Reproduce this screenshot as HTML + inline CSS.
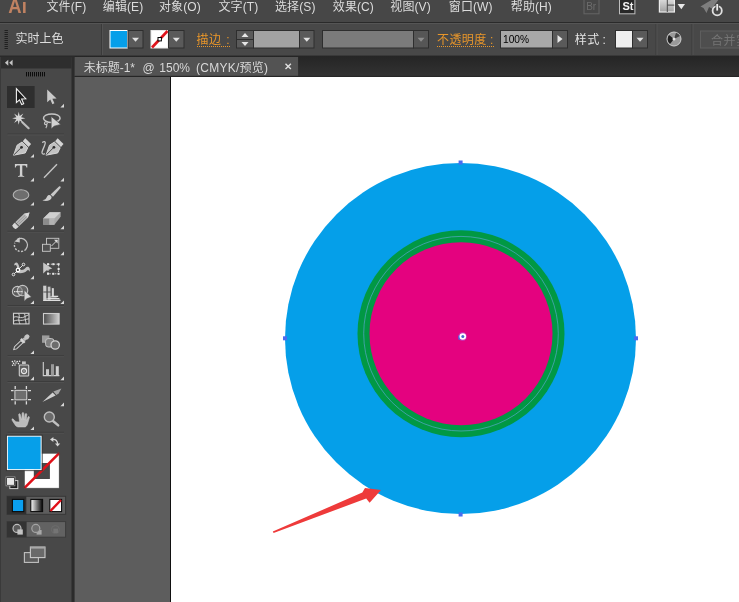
<!DOCTYPE html>
<html><head><meta charset="utf-8"><title>Illustrator</title>
<style>
html,body{margin:0;padding:0;background:#484848;overflow:hidden}
body{width:739px;height:602px;position:relative;font-family:"Liberation Sans","Noto Sans CJK SC",sans-serif}
svg{position:absolute;left:0;top:0;display:block}
svg text{font-family:"Liberation Sans","Noto Sans CJK SC",sans-serif;-webkit-font-smoothing:antialiased}
svg{will-change:transform}
</style></head><body>
<svg width="739" height="602" viewBox="0 0 739 602">
<defs>
<linearGradient id="gr1" x1="0" y1="0" x2="1" y2="0"><stop offset="0" stop-color="#fff"/><stop offset="1" stop-color="#000"/></linearGradient>
<linearGradient id="gr2" x1="0" y1="0" x2="1" y2="0"><stop offset="0" stop-color="#4a4a4a"/><stop offset="1" stop-color="#d0d0d0"/></linearGradient>
<linearGradient id="gr3" x1="0" y1="0" x2="0" y2="1"><stop offset="0" stop-color="#6a6a6a"/><stop offset="1" stop-color="#8a8a8a"/></linearGradient>
<linearGradient id="gr4" x1="0" y1="0" x2="0" y2="1"><stop offset="0" stop-color="#e6e6e6"/><stop offset="1" stop-color="#a0a0a0"/></linearGradient>
<linearGradient id="gr5" x1="0" y1="0" x2="0" y2="1"><stop offset="0" stop-color="#252525"/><stop offset="1" stop-color="#333333"/></linearGradient>
<path id="tri" d="M3.6 0V3.6H0Z" fill="#d8d8d8"/>
</defs>
<rect x="0" y="0" width="739" height="602" fill="#484848" />
<rect x="0" y="0" width="739" height="22" fill="#474747" />
<rect x="0" y="22" width="739" height="1" fill="#2a2a2a" />
<rect x="0" y="23" width="739" height="33" fill="#484848" />
<rect x="0" y="23" width="739" height="1" fill="#555555" />
<rect x="0" y="55.5" width="739" height="2" fill="#2a2a2a" />
<rect x="0" y="57" width="71.5" height="545" fill="#484848" />
<rect x="0" y="57" width="71.5" height="11.5" fill="#2e2e2e" />
<rect x="71.5" y="57" width="3.2" height="545" fill="#2b2b2b" />
<rect x="0" y="57" width="1" height="545" fill="#3a3a3a" />
<rect x="74.7" y="56" width="665" height="21" fill="url(#gr5)" />
<rect x="74.7" y="57" width="223.4" height="18.9" fill="#535353" />
<rect x="74.7" y="75.9" width="665" height="1.1" fill="#262626" />
<rect x="74.7" y="77" width="95.8" height="525" fill="#5d5d5d" />
<rect x="170" y="77" width="570" height="525" fill="#ffffff" />
<rect x="170" y="77" width="1" height="525" fill="#111111" />
<g transform="translate(8.300 0) scale(0.880 1) translate(-8.300 0)"><g aria-label="Ai"><text x="8.30" y="13.00" font-size="21" fill="#c08262" font-weight="bold">Ai</text></g></g>
<g aria-label="文件(F)"><text x="46.50" y="11.20" font-size="12" fill="#dcdcdc" letter-spacing="0.1">文件</text><text x="70.70" y="11.20" font-size="12" fill="#dcdcdc" letter-spacing="0.1">(F)</text></g>
<g aria-label="编辑(E)"><text x="102.80" y="11.20" font-size="12" fill="#dcdcdc" letter-spacing="0.1">编辑</text><text x="127.00" y="11.20" font-size="12" fill="#dcdcdc" letter-spacing="0.1">(E)</text></g>
<g aria-label="对象(O)"><text x="159.00" y="11.20" font-size="12" fill="#dcdcdc" letter-spacing="0.1">对象</text><text x="183.20" y="11.20" font-size="12" fill="#dcdcdc" letter-spacing="0.1">(O)</text></g>
<g aria-label="文字(T)"><text x="218.50" y="11.20" font-size="12" fill="#dcdcdc" letter-spacing="0.1">文字</text><text x="242.70" y="11.20" font-size="12" fill="#dcdcdc" letter-spacing="0.1">(T)</text></g>
<g aria-label="选择(S)"><text x="275.00" y="11.20" font-size="12" fill="#dcdcdc" letter-spacing="0.1">选择</text><text x="299.20" y="11.20" font-size="12" fill="#dcdcdc" letter-spacing="0.1">(S)</text></g>
<g aria-label="效果(C)"><text x="332.80" y="11.20" font-size="12" fill="#dcdcdc" letter-spacing="0.1">效果</text><text x="357.00" y="11.20" font-size="12" fill="#dcdcdc" letter-spacing="0.1">(C)</text></g>
<g aria-label="视图(V)"><text x="390.30" y="11.20" font-size="12" fill="#dcdcdc" letter-spacing="0.1">视图</text><text x="414.50" y="11.20" font-size="12" fill="#dcdcdc" letter-spacing="0.1">(V)</text></g>
<g aria-label="窗口(W)"><text x="448.80" y="11.20" font-size="12" fill="#dcdcdc" letter-spacing="0.1">窗口</text><text x="473.00" y="11.20" font-size="12" fill="#dcdcdc" letter-spacing="0.1">(W)</text></g>
<g aria-label="帮助(H)"><text x="510.80" y="11.20" font-size="12" fill="#dcdcdc" letter-spacing="0.1">帮助</text><text x="535.00" y="11.20" font-size="12" fill="#dcdcdc" letter-spacing="0.1">(H)</text></g>
<rect x="4.5" y="30" width="3.4" height="1" fill="#202020" />
<rect x="4.5" y="32" width="3.4" height="1" fill="#202020" />
<rect x="4.5" y="34" width="3.4" height="1" fill="#202020" />
<rect x="4.5" y="36" width="3.4" height="1" fill="#202020" />
<rect x="4.5" y="38" width="3.4" height="1" fill="#202020" />
<rect x="4.5" y="40" width="3.4" height="1" fill="#202020" />
<rect x="4.5" y="42" width="3.4" height="1" fill="#202020" />
<rect x="4.5" y="44" width="3.4" height="1" fill="#202020" />
<rect x="4.5" y="46" width="3.4" height="1" fill="#202020" />
<rect x="4.5" y="48" width="3.4" height="1" fill="#202020" />
<g aria-label="实时上色"><text x="15.50" y="43.00" font-size="12" fill="#dedede">实时上色</text></g>
<rect x="101" y="24" width="1" height="31" fill="#3a3a3a" />
<rect x="102" y="24" width="1" height="31" fill="#525252" />
<rect x="110" y="30.5" width="17.5" height="17.5" fill="#069fe9" stroke="#ffffff" stroke-width="1"/>
<rect x="128" y="30.5" width="15" height="17.5" fill="#5a5a5a" stroke="#2e2e2e" stroke-width="1"/>
<path d="M132 37.75h7l-3.5 4z" fill="#e0e0e0"/>
<rect x="151" y="30.5" width="17" height="17.5" fill="#ffffff" stroke="#e8e8e8" stroke-width="1"/>
<path d="M152 47.500L167.500 31" stroke="#e0141c" stroke-width="2.600"/>
<rect x="158" y="37.5" width="3.4" height="3.4" fill="#ffffff" stroke="#000" stroke-width="1"/>
<rect x="168.5" y="30.5" width="15.5" height="17.5" fill="#5a5a5a" stroke="#2e2e2e" stroke-width="1"/>
<path d="M172.75 37.75h7l-3.5 4z" fill="#e0e0e0"/>
<g aria-label="描边"><text x="196.50" y="44.00" font-size="12" fill="#e8962a" letter-spacing="0.5">描边</text></g>
<g aria-label=":"><text x="226.30" y="43.50" font-size="12" fill="#e8962a">:</text></g>
<path d="M197 46.5H231" stroke="#e8962a" stroke-width="1" stroke-dasharray="1 1"/>
<rect x="236.5" y="30.5" width="17" height="17.5" fill="#5a5a5a" stroke="#2e2e2e" stroke-width="1"/>
<rect x="236.5" y="39" width="17" height="1" fill="#2e2e2e" />
<path d="M241.5 37h7l-3.5-4z" fill="#e6e6e6"/><path d="M241.5 42h7l-3.5 4z" fill="#e6e6e6"/>
<rect x="253.5" y="30.5" width="46" height="17.5" fill="#a2a2a2" stroke="#2e2e2e" stroke-width="1"/>
<rect x="299.5" y="30.5" width="14.5" height="17.5" fill="#5a5a5a" stroke="#2e2e2e" stroke-width="1"/>
<path d="M303.25 37.75h7l-3.5 4z" fill="#e0e0e0"/>
<rect x="322.5" y="30.5" width="91" height="17.5" fill="#7b7b7b" stroke="#2e2e2e" stroke-width="1"/>
<rect x="413.5" y="30.5" width="15" height="17.5" fill="#565656" stroke="#2e2e2e" stroke-width="1"/>
<path d="M417.5 37.75h7l-3.5 4z" fill="#8c8c8c"/>
<g aria-label="不透明度"><text x="437.00" y="43.80" font-size="12" fill="#e8962a" letter-spacing="0.4">不透明度</text></g>
<g aria-label=":"><text x="490.00" y="43.50" font-size="12" fill="#e8962a">:</text></g>
<path d="M437 46.5H494" stroke="#e8962a" stroke-width="1" stroke-dasharray="1 1"/>
<rect x="500.5" y="30.5" width="52" height="17.5" fill="#a8a8a8" stroke="#2e2e2e" stroke-width="1"/>
<g aria-label="100%"><text x="503.00" y="42.50" font-size="10.2" fill="#000000">100%</text></g>
<rect x="552.5" y="30.5" width="15" height="17.5" fill="#5a5a5a" stroke="#2e2e2e" stroke-width="1"/>
<path d="M557.5 35v8l5-4z" fill="#e8e8e8"/>
<g aria-label="样式"><text x="574.80" y="44.00" font-size="12" fill="#e4e4e4" letter-spacing="0.4">样式</text></g>
<g aria-label=":"><text x="602.50" y="43.50" font-size="12" fill="#e4e4e4">:</text></g>
<rect x="615.5" y="30.5" width="17" height="17.5" fill="#eeeeee" stroke="#2e2e2e" stroke-width="1"/>
<rect x="632.5" y="30.5" width="15" height="17.5" fill="#5a5a5a" stroke="#2e2e2e" stroke-width="1"/>
<path d="M636.5 37.75h7l-3.5 4z" fill="#e0e0e0"/>
<rect x="655.5" y="24" width="1" height="31" fill="#3a3a3a" />
<rect x="656.5" y="24" width="1" height="31" fill="#525252" />
<circle cx="674" cy="39" r="7" fill="#9a9a9a" stroke="#d0d0d0" stroke-width="1"/><path d="M674 39L669 35A6.4 6.4 0 0 0 670 44Z" fill="#222"/><path d="M674 39L680 36A6.4 6.4 0 0 0 676 32.8Z" fill="#444"/><circle cx="674" cy="39" r="1.5" fill="#e8e8e8"/>
<rect x="691.5" y="24" width="1" height="31" fill="#3a3a3a" />
<rect x="692.5" y="24" width="1" height="31" fill="#525252" />
<rect x="700.5" y="31" width="45" height="17" fill="#4e4e4e" stroke="#5e5e5e" stroke-width="1"/>
<g aria-label="合并实"><text x="711.00" y="44.50" font-size="12" fill="#747474" letter-spacing="0.6">合并实</text></g>
<rect x="584" y="-3" width="15" height="16.8" fill="none" stroke="#666666" stroke-width="1"/>
<g aria-label="Br"><text x="586.20" y="10.40" font-size="10" fill="#6c6c6c">Br</text></g>
<rect x="619.5" y="-3" width="15.4" height="16.8" fill="#282828" stroke="#bebebe" stroke-width="1"/>
<g aria-label="St"><text x="622.40" y="10.40" font-size="11" fill="#f4f4f4" font-weight="bold">St</text></g>
<rect x="659.4" y="-3" width="15" height="15" fill="url(#gr4)" stroke="#ececec" stroke-width="1.200"/>
<rect x="666.8" y="-3" width="1" height="15" fill="#4a4a4a" />
<rect x="667.3" y="4.6" width="7" height="1" fill="#4a4a4a" />
<path d="M677.600 4h7.400l-3.700 5.200z" fill="#e8e8e8"/>
<path d="M700.500 6.500L713 -1L719 -1L712 8.500L709 7L706.500 13L703.500 8Z" fill="#7e7e7e"/><circle cx="717.200" cy="10.700" r="4.600" fill="#474747" stroke="#e0e0e0" stroke-width="1.800"/><rect x="715.600" y="3.600" width="3.200" height="7" fill="#474747"/><rect x="716.300" y="4" width="1.800" height="6.600" fill="#ececec"/>
<g aria-label="未标题-1*"><text x="83.70" y="71.80" font-size="12" fill="#d8d8d8">未标题</text><text x="119.70" y="71.80" font-size="12" fill="#d8d8d8">-1*</text></g>
<g aria-label="@"><text x="142.60" y="71.80" font-size="12" fill="#d8d8d8">@</text></g>
<g aria-label="150%"><text x="159.30" y="71.80" font-size="12" fill="#d8d8d8">150%</text></g>
<g aria-label="(CMYK/预览)"><text x="196.00" y="71.80" font-size="12" fill="#d8d8d8" letter-spacing="0.25">(CMYK/</text><text x="239.50" y="71.80" font-size="12" fill="#d8d8d8" letter-spacing="0.25">预览</text><text x="264.00" y="71.80" font-size="12" fill="#d8d8d8" letter-spacing="0.25">)</text></g>
<path d="M285.5 63.8l5.4 5.2M290.9 63.8l-5.4 5.2" stroke="#e0e0e0" stroke-width="1.4"/>
<circle cx="460.5" cy="338.5" r="175.5" fill="#059fe9"/>
<circle cx="461" cy="333.7" r="103.5" fill="#019844"/>
<circle cx="461" cy="333.7" r="97.3" fill="none" stroke="#5aa6c8" stroke-width="0.7"/>
<circle cx="461" cy="333.7" r="91.5" fill="#e4027f"/>
<rect x="458.6" y="160.5" width="4" height="4" fill="#4a6cf0" />
<rect x="458.6" y="512.5" width="4" height="4" fill="#4a6cf0" />
<rect x="283" y="336.3" width="4" height="4" fill="#4a6cf0" />
<rect x="634" y="336.3" width="4" height="4" fill="#4a6cf0" />
<circle cx="462.600" cy="336.600" r="4.500" fill="#c43cc0" fill-opacity="0.700"/><rect x="458.300" y="335.600" width="3" height="4" fill="#4a64e0"/><circle cx="462.800" cy="336.500" r="3.300" fill="#ffffff"/><circle cx="462.800" cy="336.500" r="1.500" fill="#3f6cc8"/>
<path d="M272.800 531.600L362.300 492.500L365 488L381 490L369.600 502.800L366.200 498.500L273.600 533Z" fill="#ee3a3a"/>
<path d="M8.3 59.8v6l-3.4-3zM12.6 59.8v6l-3.4-3z" fill="#c4c4c4"/>
<rect x="26" y="72" width="1" height="4.4" fill="#0c0c0c" />
<rect x="28" y="72" width="1" height="4.4" fill="#0c0c0c" />
<rect x="30" y="72" width="1" height="4.4" fill="#0c0c0c" />
<rect x="32" y="72" width="1" height="4.4" fill="#0c0c0c" />
<rect x="34" y="72" width="1" height="4.4" fill="#0c0c0c" />
<rect x="36" y="72" width="1" height="4.4" fill="#0c0c0c" />
<rect x="38" y="72" width="1" height="4.4" fill="#0c0c0c" />
<rect x="40" y="72" width="1" height="4.4" fill="#0c0c0c" />
<rect x="42" y="72" width="1" height="4.4" fill="#0c0c0c" />
<rect x="44" y="72" width="1" height="4.4" fill="#0c0c0c" />
<rect x="7" y="86" width="27.6" height="22" fill="#2e2e2e" />
<path d="M16.4 88.6V102.6L19.5 99.8L21.7 104.6L23.7 103.7L21.6 99L25.8 98.7Z" fill="#1a1a1a" stroke="#f2f2f2" stroke-width="1.1" stroke-linejoin="miter"/>
<path d="M47.2 89.4V102.2L50.3 99.6L52.4 104.2L54.4 103.3L52.4 98.8L56.6 98.4Z" fill="#c9c9c9"/>
<use href="#tri" x="60.4" y="103.8"/>
<path d="M22.3 122.3L28.6 128.2" stroke="#bdbdbd" stroke-width="2.2" stroke-linecap="round"/>
<path d="M18.7 111.8l1 4.2 3.6-2.4-2.2 3.6 4.3 1-4.3 1 2.2 3.7-3.6-2.4-1 4.3-1-4.3-3.6 2.4 2.3-3.7-4.3-1 4.3-1-2.3-3.6 3.6 2.4z" fill="#d6d6d6"/>
<ellipse cx="51.8" cy="118.2" rx="8.3" ry="4.3" fill="none" stroke="#c6c6c6" stroke-width="1.5"/>
<path d="M45.6 121.4c-1.6 1.2-1.4 3 .2 3.2 1.4.2 2-1.4.8-2.2M46.6 124.6c.6 1.2.2 2.4-.8 3.4" fill="none" stroke="#c6c6c6" stroke-width="1.2"/>
<path d="M51.2 116.4V129L54 126.2L60.8 124.4Z" fill="#d2d2d2" stroke="#484848" stroke-width="0.6"/>
<rect x="7.5" y="133.5" width="56.5" height="1" fill="#3c3c3c" />
<rect x="7.5" y="134.5" width="56.5" height="1" fill="#505050" />
<g transform="translate(13.6 155.2) scale(1.1 1.17)">
<path d="M10.6 -14.4L15.9 -9.6L13.6 -7.1L8.3 -11.9Z" fill="#d4d4d4"/>
<path d="M0 0L3.2 -8.6L7.6 -11.2L12.9 -6.4L10.6 -1.9Z" fill="#c2c2c2" stroke="#dcdcdc" stroke-width="0.8" stroke-linejoin="round"/>
<path d="M0.4 -0.4L6.6 -6.2" stroke="#3a3a3a" stroke-width="0.8"/>
<circle cx="7.2" cy="-6.7" r="1.25" fill="#2e2e2e"/>
</g>
<use href="#tri" x="30.4" y="153.9"/>
<g transform="translate(46 155.2) scale(1.1 1.17)">
<path d="M10.6 -14.4L15.9 -9.6L13.6 -7.1L8.3 -11.9Z" fill="#d4d4d4"/>
<path d="M0 0L3.2 -8.6L7.6 -11.2L12.9 -6.4L10.6 -1.9Z" fill="#c2c2c2" stroke="#dcdcdc" stroke-width="0.8" stroke-linejoin="round"/>
<path d="M0.4 -0.4L6.6 -6.2" stroke="#3a3a3a" stroke-width="0.8"/>
<circle cx="7.2" cy="-6.7" r="1.25" fill="#2e2e2e"/>
</g>
<path d="M42.6 142.2c1.4-1.2 3-.6 2.6 1.2-.6 3-2.8 6.4-3.2 8.8-.2 1.6.8 2.2 2.4 1.6" fill="none" stroke="#c8c8c8" stroke-width="1.3" stroke-linecap="round"/>
<path d="M14.9 164.1h12.4v3.3h-.9c-.2-1.5-.8-2-2.2-2h-1.9v9c0 1.2.5 1.5 1.9 1.6v.8h-6.2v-.8c1.400-.1 1.900-.4 1.900-1.600v-9h-1.900c-1.400 0-2 .5-2.200 2h-.9z" fill="#d0d0d0"/>
<use href="#tri" x="30.4" y="177.8"/>
<path d="M44 177.8L57 164.2" stroke="#c4c4c4" stroke-width="1.4"/>
<use href="#tri" x="60.4" y="177.8"/>
<ellipse cx="21" cy="194.9" rx="7.8" ry="5.2" fill="#6e6e6e" stroke="#b4b4b4" stroke-width="1.1"/>
<use href="#tri" x="30.4" y="202"/>
<path d="M50.6 194.6L59 186.6c1-.9 2.300.3 1.500 1.300L53 196.800Z" fill="#c8c8c8"/>
<path d="M42.4 200.200c2.600-.2 3.800-1.400 4.600-3.400.800-1.800 2.600-2.200 3.800-1 1.400 1.400 1 3.200-1 4.200-2.400 1.200-5.200 1.200-7.400.2z" fill="#cdcdcd"/>
<use href="#tri" x="60.4" y="202"/>
<g transform="translate(14 227.2) rotate(-43.5)"><path d="M0 -2.400L3.200 -2.800H16.500L21.400 0L16.500 2.800H3.200L0 2.400Z" fill="#b9b9b9"/><path d="M0 -2.400L3.200 -2.800V2.800L0 2.400C-0.8 1 -0.8 -1 0 -2.400Z" fill="#d6d6d6"/><path d="M4.200 -2.800v5.600" stroke="#484848" stroke-width="0.9"/><path d="M16.500 -2.800L21.400 0L16.500 2.800Z" fill="#d8d8d8"/><path d="M5 -0.9H16.500M5 1H16.500" stroke="#8c8c8c" stroke-width="0.7"/></g>
<use href="#tri" x="30.4" y="225.6"/>
<path d="M43.2 218.600L49.600 212.200H60.600L60.600 216.800L54.400 224.800H43.200Z" fill="#a8a8a8"/>
<path d="M43.200 218.600L49.600 212.200H60.600L54.400 218.600Z" fill="#cfcfcf"/>
<path d="M43.200 218.600H49.300V224.800H43.200Z" fill="#8c8c8c"/><path d="M49.300 218.600H54.400V224.800H49.300Z" fill="#b4b4b4"/>
<use href="#tri" x="60.4" y="225.6"/>
<rect x="7.5" y="230.8" width="56.5" height="1" fill="#3c3c3c" />
<rect x="7.5" y="231.8" width="56.5" height="1" fill="#505050" />
<path d="M17.17 239.68A6.500 6.500 0 0 1 25.88 249.18" fill="none" stroke="#c2c2c2" stroke-width="1.400"/>
<path d="M25.88 249.18A6.500 6.500 0 0 1 14.79 242.78" fill="none" stroke="#c2c2c2" stroke-width="1.400" stroke-dasharray="2 1.400"/>
<path d="M14.400 241.600L19.600 237.200L19.800 242.400Z" fill="#c8c8c8"/>
<use href="#tri" x="30.4" y="251.6"/>
<rect x="46.5" y="238.3" width="12.3" height="10" fill="#484848" stroke="#c8c8c8" stroke-width="0.900"/>
<rect x="42.5" y="244.3" width="7.8" height="7" fill="#505050" stroke="#c8c8c8" stroke-width="0.900"/>
<path d="M51.500 246L57 240.500" stroke="#d4d4d4" stroke-width="1"/><path d="M57.600 239.800V243.400L54 239.800Z" fill="#dcdcdc"/>
<use href="#tri" x="60.4" y="251.6"/>
<path d="M14.2 265.4C14 262.800 16.600 261.600 17.900 263.400C19.100 265.400 19.500 268 20.600 269.800C22.400 270.200 24.400 269.400 25.400 268C26.700 266.200 29 266.300 29.600 268.300C30 269.600 29.900 271 29.600 271.900C29.200 270.100 27.900 269.400 27 270.600C25 273.200 20 273.800 15.800 272.600C17 270.200 17.300 268 16.700 265.900C16.300 264.700 15 264.600 14.200 265.400Z" fill="#c2c2c2"/>
<path d="M13.500 274.500L23.500 264.500" stroke="#f0f0f0" stroke-width="0.900"/>
<circle cx="13.500" cy="274.500" r="1.300" fill="#484848" stroke="#f2f2f2" stroke-width="0.900"/><circle cx="23.500" cy="264.500" r="1.300" fill="#484848" stroke="#f2f2f2" stroke-width="0.900"/><circle cx="17.900" cy="270" r="1.700" fill="#3a3a3a" stroke="#ffffff" stroke-width="1.200"/>
<use href="#tri" x="30.4" y="275.6"/>
<rect x="48" y="264.200" width="10.600" height="9.600" fill="none" stroke="#cfcfcf" stroke-width="1" stroke-dasharray="1.600 1.200"/>
<rect x="47" y="263.2" width="2" height="2" fill="#e4e4e4" />
<rect x="52.3" y="263.2" width="2" height="2" fill="#e4e4e4" />
<rect x="57.6" y="263.2" width="2" height="2" fill="#e4e4e4" />
<rect x="57.6" y="268" width="2" height="2" fill="#e4e4e4" />
<rect x="57.6" y="272.8" width="2" height="2" fill="#e4e4e4" />
<rect x="52.3" y="272.8" width="2" height="2" fill="#e4e4e4" />
<rect x="47" y="272.8" width="2" height="2" fill="#e4e4e4" />
<path d="M43.200 262.400V273.400L46.400 270.600L52.200 268.400Z" fill="#c6c6c6"/>
<circle cx="17.400" cy="291.400" r="5" fill="#5c5c5c" stroke="#c4c4c4" stroke-width="1.100"/><circle cx="22.600" cy="290.600" r="5.200" fill="#7a7a7a" fill-opacity="0.600" stroke="#c4c4c4" stroke-width="1.100"/>
<path d="M14.200 291.600H23" stroke="#ffffff" stroke-width="1.300" stroke-dasharray="1.200 0.900"/>
<path d="M24.200 290V301.200L27 298.600L31.400 297Z" fill="#d4d4d4" stroke="#484848" stroke-width="0.500"/>
<use href="#tri" x="30.4" y="300.4"/>
<path d="M43.300 285.700L53.800 288.400V296L60.400 299.200V301H43.300Z" fill="#8e8e8e"/>
<rect x="43.3" y="285.7" width="3.2" height="15.2" fill="#cdcdcd" />
<rect x="47.7" y="286.7" width="2.9" height="14" fill="#c0c0c0" />
<rect x="51.7" y="288.2" width="2.1" height="8.6" fill="#d6d6d6" />
<rect x="43.3" y="291.5" width="7.6" height="1" fill="#505050" />
<rect x="46.5" y="286" width="1.2" height="12" fill="#4c4c4c" />
<rect x="50.6" y="287" width="1.1" height="9" fill="#4c4c4c" />
<path d="M51.700 296.400H58.200M47.700 298.500H59.400M43.300 300.500H60.400" stroke="#dedede" stroke-width="1.100"/>
<use href="#tri" x="60.4" y="300.4"/>
<rect x="7.5" y="305" width="56.5" height="1" fill="#3c3c3c" />
<rect x="7.5" y="306" width="56.5" height="1" fill="#505050" />
<rect x="13.5" y="313.3" width="15.5" height="10.6" fill="#3c3c3c" stroke="#d0d0d0" stroke-width="1.100"/>
<path d="M13.500 317.200c3.200-1.600 6.200 1.200 9.200.4 2.200-.6 4.200-2.400 6.200-3M13.500 321.200c2.800-1.400 4.800-1 7.200-.8 2.800.2 5.600-1.400 8.200-1.600M18.600 313.500c1.600 2.200-.2 4.800.2 7 .2 1.400 1 2.600 1.200 3.600M24.200 313.500c1.600 1.800.4 4.200 1.200 6.400.4 1.400.8 2.800.6 4.200" fill="none" stroke="#d6d6d6" stroke-width="0.950"/>
<rect x="43.5" y="313.5" width="15.6" height="10.6" fill="url(#gr2)" stroke="#cdcdcd" stroke-width="1.100"/>
<g transform="translate(13.700 349.600) rotate(-44)"><path d="M0 0L2.600 -1.500H11.400V1.500H2.600Z" fill="#484848" stroke="#d2d2d2" stroke-width="1"/><rect x="11.400" y="-2.700" width="2.400" height="5.400" fill="#d6d6d6"/><rect x="13.800" y="-1.600" width="2.400" height="3.200" fill="#bcbcbc"/><rect x="15.600" y="-2.300" width="5.400" height="4.600" rx="2.200" fill="#c4c4c4"/></g>
<use href="#tri" x="30.4" y="350.4"/>
<rect x="42" y="335.4" width="7.4" height="7.4" fill="#9c9c9c" />
<rect x="45.600" y="338.600" width="8.400" height="8.400" rx="2.600" fill="#7e7e7e" stroke="#c6c6c6" stroke-width="1"/>
<circle cx="55.200" cy="345" r="4.200" fill="#6c6c6c" stroke="#cfcfcf" stroke-width="1.300"/>
<rect x="7.5" y="355.2" width="56.5" height="1" fill="#3c3c3c" />
<rect x="7.5" y="356.2" width="56.5" height="1" fill="#505050" />
<rect x="19.300" y="365" width="9.400" height="11" rx="0.800" fill="#5e5e5e" stroke="#cdcdcd" stroke-width="1.100"/>
<rect x="22" y="361.4" width="3.8" height="2.6" fill="#c4c4c4" />
<circle cx="24" cy="371" r="2.500" fill="#484848" stroke="#e6e6e6" stroke-width="1.300"/><circle cx="24" cy="371" r="0.800" fill="#e6e6e6"/>
<circle cx="12.4" cy="361.6" r="0.800" fill="#e8e8e8"/>
<circle cx="14.8" cy="361" r="0.800" fill="#e8e8e8"/>
<circle cx="17.2" cy="361.6" r="0.800" fill="#e8e8e8"/>
<circle cx="19.6" cy="361.2" r="0.800" fill="#e8e8e8"/>
<circle cx="13.6" cy="363.4" r="0.800" fill="#e8e8e8"/>
<circle cx="16" cy="363" r="0.800" fill="#e8e8e8"/>
<circle cx="18.4" cy="363.6" r="0.800" fill="#e8e8e8"/>
<circle cx="12.6" cy="365.2" r="0.800" fill="#e8e8e8"/>
<circle cx="15" cy="365" r="0.800" fill="#e8e8e8"/>
<use href="#tri" x="30.4" y="376.6"/>
<path d="M43.300 362V375.600H59.400" stroke="#d0d0d0" stroke-width="1.100" fill="none"/>
<rect x="46" y="369.2" width="3" height="6.4" fill="#c6c6c6" />
<rect x="51" y="364.2" width="3" height="11.4" fill="#9a9a9a" />
<rect x="55.8" y="366.2" width="3" height="9.4" fill="#d0d0d0" />
<use href="#tri" x="60.4" y="376.6"/>
<rect x="7.5" y="381" width="56.5" height="1" fill="#3c3c3c" />
<rect x="7.5" y="382" width="56.5" height="1" fill="#505050" />
<rect x="14.9" y="390.4" width="11.8" height="9.4" fill="#6e6e6e" stroke="#c8c8c8" stroke-width="1.100"/>
<path d="M15.200 386V389M26.400 386V389M15.200 401.200V404.400M26.400 401.200V404.400M11 390.600H13.600M11 399.600H13.600M28 390.600H31M28 399.600H31" stroke="#dcdcdc" stroke-width="1.300"/>
<path d="M42.400 402L52.600 392.400L55.600 395.600Z" fill="#cfcfcf"/><path d="M53.400 391.600L61.400 388.600L58.600 393.600L56.400 395Z" fill="#a6a6a6"/>
<use href="#tri" x="60.4" y="402.6"/>
<path d="M15.800 421.800c-1.200-1.600-2.400-2.800-3.600-3 -.8 1 .6 2.600 1.800 4.400 1.200 1.800 2 3.600 4 3.800h7c1.600-.4 2.200-2 2.800-4l1.600-5.400c.2-1-.8-1.400-1.400-.6l-1.800 3.800.6-6.400c0-1.100-1.400-1.200-1.700-.1l-1 5.700-.3-6.600c-.1-1.200-1.600-1.200-1.700 0l-.4 6.600-1.400-5.600c-.3-1.100-1.700-.9-1.600.3l.9 7.300z" fill="#bcbcbc" stroke="#d0d0d0" stroke-width="0.500"/>
<use href="#tri" x="30.4" y="426.4"/>
<path d="M53 421L58.200 425.400" stroke="#c0c0c0" stroke-width="2.400" stroke-linecap="round"/>
<circle cx="49.300" cy="417" r="5" fill="#6a6a6a" stroke="#bdbdbd" stroke-width="1.400"/>
<rect x="7.5" y="431.8" width="56.5" height="1" fill="#3c3c3c" />
<rect x="7.5" y="432.8" width="56.5" height="1" fill="#505050" />
<path d="M24.300 453.200H59.200V488.200H24.300ZM33.900 463V478.900H49.700V463Z" fill="#ffffff" fill-rule="evenodd"/>
<rect x="33.9" y="463" width="15.8" height="15.9" fill="#484848" />
<path d="M24.300 488.200L59.200 453.200" stroke="#e01018" stroke-width="2.600"/>
<rect x="24.300" y="453.200" width="34.900" height="35" fill="none" stroke="#3a3a3a" stroke-width="0.600"/>
<rect x="7.3" y="436.1" width="33.9" height="33.6" fill="#069fe9" stroke="#ffffff" stroke-width="1.100"/>
<rect x="6.300" y="435.100" width="35.900" height="35.600" fill="none" stroke="#333" stroke-width="0.800"/>
<path d="M52.200 439.400c3.600-.4 5.600 1.600 5.400 5.200" fill="none" stroke="#d4d4d4" stroke-width="1.300"/><path d="M50 439.500L53.400 437V442Z" fill="#d8d8d8"/><path d="M57.600 446.600L55 443.400H60.200Z" fill="#d8d8d8"/>
<rect x="9.8" y="480.6" width="8" height="8" fill="#1c1c1c" stroke="#cfcfcf" stroke-width="1"/>
<rect x="6.5" y="477.4" width="8" height="8" fill="#e8e8e8" stroke="#1c1c1c" stroke-width="1"/>
<rect x="6" y="476.900" width="9" height="9" fill="none" stroke="#bdbdbd" stroke-width="0.600"/>
<rect x="7" y="496.3" width="58.6" height="18" fill="#5e5e5e" stroke="#383838" stroke-width="1"/>
<rect x="7" y="496.3" width="19.3" height="18" fill="#303030" />
<rect x="12.4" y="499.4" width="11.4" height="12.2" fill="#0a9ff0" stroke="#0c0c0c" stroke-width="1.100"/>
<rect x="30.8" y="499.4" width="11.8" height="12.2" fill="url(#gr1)" stroke="#0c0c0c" stroke-width="1.100"/>
<rect x="49.8" y="499.4" width="11.8" height="12.2" fill="#ffffff" stroke="#0c0c0c" stroke-width="1.100"/>
<path d="M50.400 511L61 500" stroke="#e01018" stroke-width="2.400"/>
<rect x="7" y="521.6" width="58.6" height="15.6" fill="#626262" stroke="#3c3c3c" stroke-width="1"/>
<rect x="7" y="521.6" width="19.6" height="15.6" fill="#333333" />
<circle cx="17" cy="528.400" r="4" fill="#5a5a5a" stroke="#bdbdbd" stroke-width="1.200"/>
<rect x="17.4" y="529.4" width="5.4" height="5.2" fill="#c4c4c4" />
<rect x="36.6" y="530" width="5" height="4.6" fill="#a8a8a8" />
<circle cx="35.800" cy="528.400" r="4" fill="#6e6e6e" stroke="#a4a4a4" stroke-width="1.200"/>
<circle cx="55.400" cy="529.600" r="4" fill="none" stroke="#6c6c6c" stroke-width="1"/>
<rect x="53.4" y="528.6" width="4.6" height="4.400" fill="#747474" />
<rect x="24.4" y="552.6" width="14" height="9.8" fill="#5c5c5c" stroke="#c0c0c0" stroke-width="1.100"/>
<rect x="30.4" y="547" width="14.6" height="10.6" fill="#6a6a6a" stroke="#cacaca" stroke-width="1.100"/>
<rect x="30.4" y="547" width="14.6" height="1.6" fill="#a8a8a8" />
</svg>
</body></html>
